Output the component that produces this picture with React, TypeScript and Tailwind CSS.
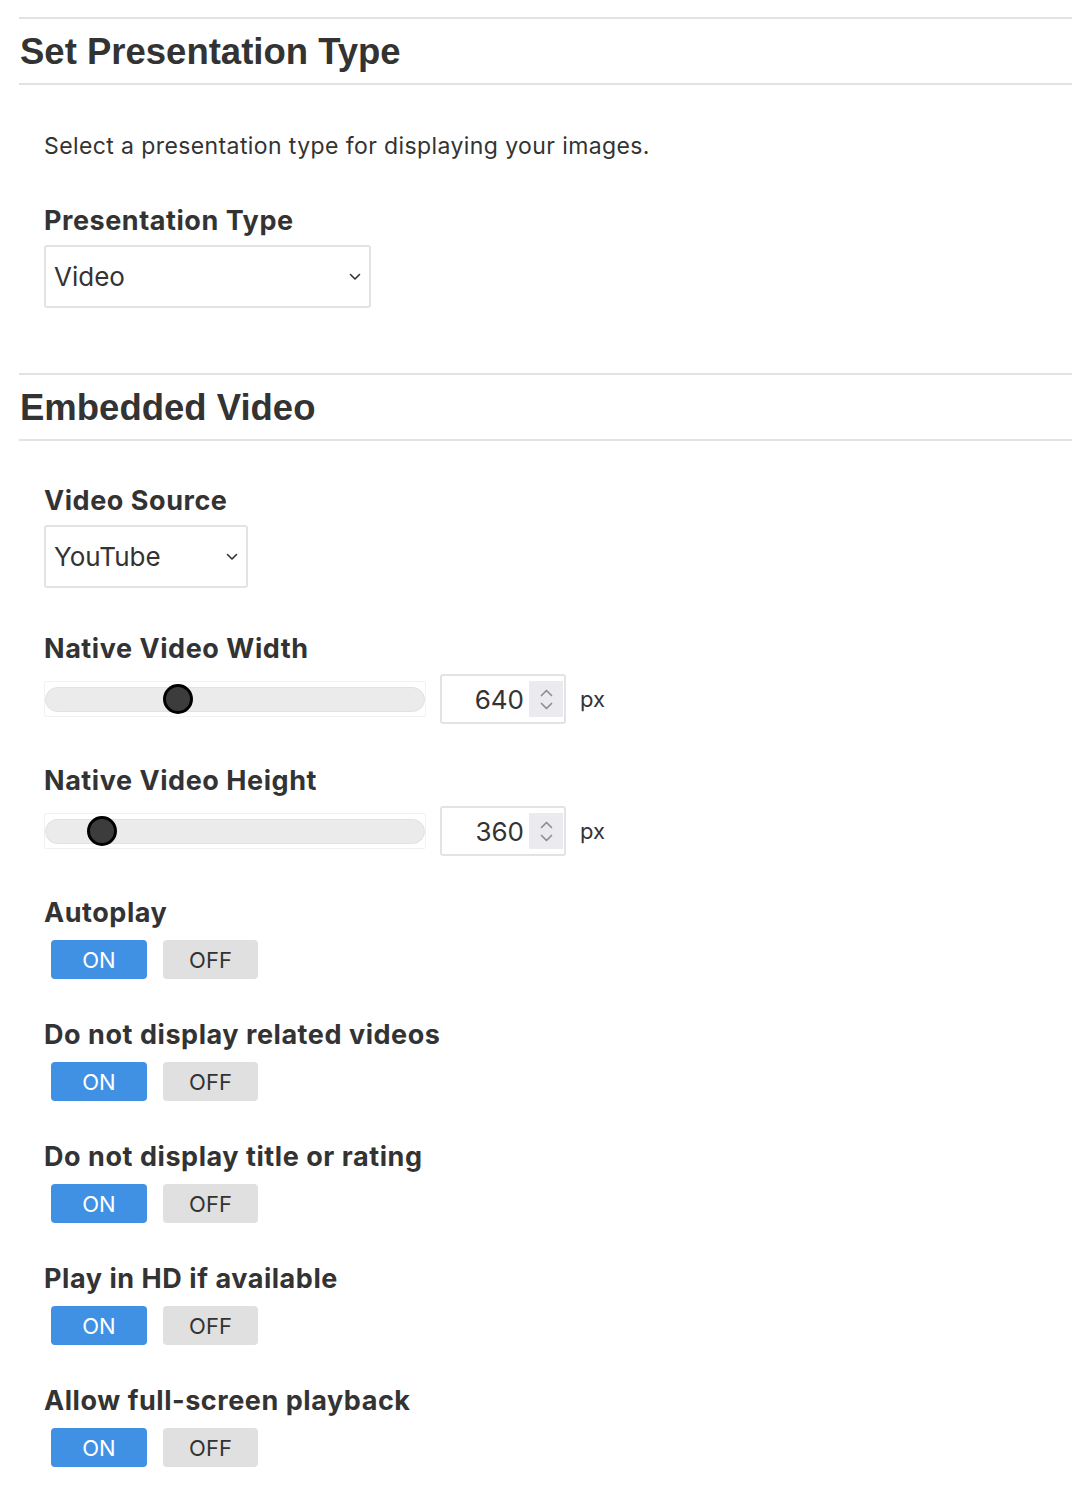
import React from "react";

const toggles = [
  "Autoplay",
  "Do not display related videos",
  "Do not display title or rating",
  "Play in HD if available",
  "Allow full-screen playback",
];

const Chevron = () => (
  <svg width="12" height="8" viewBox="0 0 12 8" fill="none">
    <path d="M1.5 1.5 6 6l4.5-4.5" stroke="#333" strokeWidth="1.6" strokeLinecap="round" strokeLinejoin="round" />
  </svg>
);

const Select = ({ value, width }: { value: string; width: string }) => (
  <div className={`mt-[8px] h-[63px] ${width} border-2 border-[#e3e3e3] rounded-[3px] flex items-center justify-between pl-[8px] pr-[8px] text-[26px] text-[#333]`}>
    <span>{value}</span>
    <Chevron />
  </div>
);

const Label = ({ children, className = "" }: { children: React.ReactNode; className?: string }) => (
  <div className={`text-[27px] leading-[32px] tracking-[0.55px] font-bold text-[#333] ${className}`}>{children}</div>
);

const Spinner = () => (
  <div className="h-[36px] w-[34px] mr-[1px] bg-[#ebebef] flex flex-col items-center justify-center gap-[5px]">
    <svg width="13" height="8" viewBox="0 0 13 8" fill="none">
      <path d="M1.5 6.5 6.5 1.5l5 5" stroke="#8e8e93" strokeWidth="1.7" strokeLinecap="round" strokeLinejoin="round" />
    </svg>
    <svg width="13" height="8" viewBox="0 0 13 8" fill="none">
      <path d="M1.5 1.5 6.5 6.5l5-5" stroke="#8e8e93" strokeWidth="1.7" strokeLinecap="round" strokeLinejoin="round" />
    </svg>
  </div>
);

const SliderRow = ({ value, thumbLeft }: { value: string; thumbLeft: number }) => (
  <div className="mt-[9px] flex items-center h-[50px]">
    <div className="relative w-[382px] h-[36px] border border-[#f2f2f2] rounded-[2px] flex items-center">
      <div className="w-full h-[25px] rounded-full bg-[#ebebeb] border border-[#e2e2e2]" />
      <div
        className="absolute top-1/2 -translate-y-1/2 w-[30px] h-[30px] rounded-full bg-[#3c3c3c] border-[3px] border-black"
        style={{ left: thumbLeft }}
      />
    </div>
    <div className="ml-[14px] w-[126px] h-[50px] border-2 border-[#e3e3e3] rounded-[3px] flex items-center justify-end">
      <span className="text-[26px] text-[#333] mr-[5px]">{value}</span>
      <Spinner />
    </div>
    <span className="ml-[14px] text-[22px] text-[#333]">px</span>
  </div>
);

const Toggle = () => (
  <div className="mt-[11px] ml-[7px] flex gap-[16px]">
    <button className="w-[96px] h-[39px] rounded-[4px] bg-[#4090e4] text-white text-[22px] leading-none">ON</button>
    <button className="w-[95px] h-[39px] rounded-[4px] bg-[#e0e0e0] text-[#333] text-[22px] leading-none">OFF</button>
  </div>
);

export default function App() {
  return (
    <div className="w-[1072px] min-h-[1496px] bg-white pl-[19px] font-['Inter','Liberation_Sans',sans-serif] text-[#333]">
      <section className="pt-[17px]">
        <h2 className="border-t-2 border-b-2 border-[#e2e2e2] h-[68px] flex items-center pt-[3px] pl-[1px] font-['Liberation_Sans','Inter',sans-serif] text-[36.5px] font-bold text-[#333]">
          Set Presentation Type
        </h2>
        <div className="pl-[25px]">
          <p className="mt-[46px] text-[23px] leading-[30px] tracking-[0.4px]">Select a presentation type for displaying your images.</p>
          <Label className="mt-[44px]">Presentation Type</Label>
          <Select value="Video" width="w-[327px]" />
        </div>
      </section>

      <section className="mt-[65px]">
        <h2 className="border-t-2 border-b-2 border-[#e2e2e2] h-[68px] flex items-center pt-[3px] pl-[1px] font-['Liberation_Sans','Inter',sans-serif] text-[36.5px] font-bold text-[#333]">
          Embedded Video
        </h2>
        <div className="pl-[25px]">
          <Label className="mt-[44px]">Video Source</Label>
          <Select value="YouTube" width="w-[204px]" />

          <Label className="mt-[45px]">Native Video Width</Label>
          <SliderRow value="640" thumbLeft={118} />

          <Label className="mt-[41px]">Native Video Height</Label>
          <SliderRow value="360" thumbLeft={42} />

          {toggles.map((t, i) => (
            <div key={t} className={i === 0 ? "mt-[41px]" : "mt-[40px]"}>
              <Label>{t}</Label>
              <Toggle />
            </div>
          ))}
        </div>
      </section>
    </div>
  );
}
